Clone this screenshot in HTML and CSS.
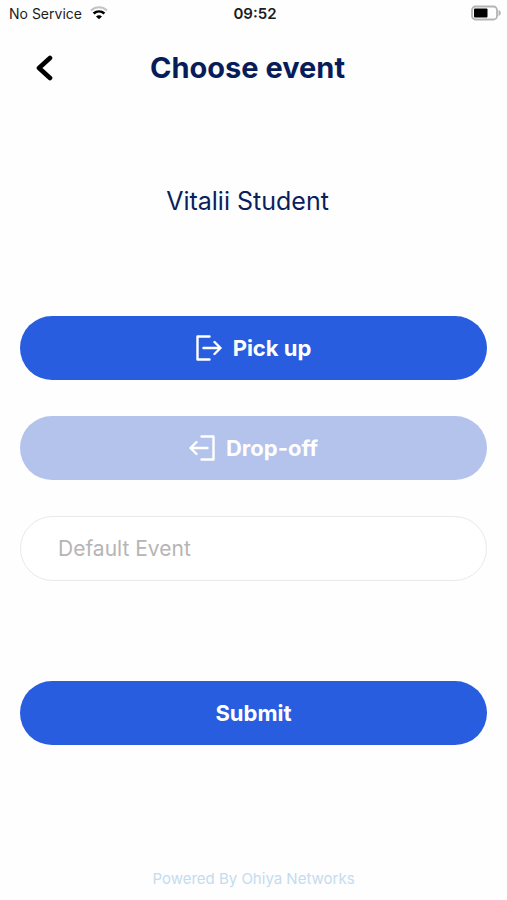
FILE: index.html
```html
<!DOCTYPE html>
<html lang="en">
<head>
<meta charset="utf-8">
<meta name="viewport" content="width=device-width, initial-scale=1">
<title>Choose event</title>
<link rel="stylesheet" href="styles.css">
</head>
<body>
<div class="status">
  <div class="carrier">
    <span>No Service</span>
    <svg class="wifi" width="18" height="14" viewBox="0 0 18 14" fill="none" aria-hidden="true">
      <path d="M1 4.4C5.6.2 12.4.2 17 4.4" stroke="#c4c4c4" stroke-width="2"/>
      <path d="M3.6 7.6C6.8 4.8 11.2 4.8 14.4 7.6" stroke="#000" stroke-width="2.6"/>
      <path d="M9 13.2L6 10.4C7.8 8.8 10.2 8.8 12 10.4Z" fill="#000"/>
    </svg>
  </div>
  <time class="clock">09:52</time>
  <svg class="battery" width="30" height="16" viewBox="0 0 30 16" fill="none" aria-hidden="true">
    <rect x="1" y="1.5" width="25" height="13" rx="3.5" stroke="#b4b4b4" stroke-width="1.8"/>
    <rect x="3" y="3.5" width="13.5" height="9" rx="1" fill="#000"/>
    <path d="M27.5 5C30.6 6.4 30.6 9.6 27.5 11Z" fill="#b4b4b4"/>
  </svg>
</div>
<header class="header">
  <button class="back" type="button" aria-label="Back">
    <svg width="18" height="26" viewBox="0 0 18 26" fill="none" aria-hidden="true">
      <path d="M15 3L4 13L15 23" stroke="#000" stroke-width="4.6" stroke-linecap="round" stroke-linejoin="round"/>
    </svg>
  </button>
  <h1 class="title">Choose event</h1>
</header>
<main class="content">
  <p class="student">Vitalii Student</p>
  <form class="form">
    <button class="pill" type="button">
      <svg width="26" height="26" viewBox="0 0 26 26" fill="none" stroke="#fff" stroke-width="2.4" stroke-linecap="round" stroke-linejoin="round" aria-hidden="true">
        <path d="M13.5 1.5H1.5V24.5H13.5M7.5 13H24.5M18.5 7L24.5 13L18.5 19"/>
      </svg>
      <span>Pick up</span>
    </button>
    <button class="pill pill-muted" type="button">
      <svg width="26" height="26" viewBox="0 0 26 26" fill="none" stroke="#fff" stroke-width="2.4" stroke-linecap="round" stroke-linejoin="round" aria-hidden="true">
        <path d="M12.5 1.5H24.5V24.5H12.5M18.5 13H1.5M7.5 7L1.5 13L7.5 19"/>
      </svg>
      <span>Drop-off</span>
    </button>
    <input class="event" type="text" placeholder="Default Event" aria-label="Event">
    <button class="pill submit" type="submit">Submit</button>
  </form>
</main>
<footer class="footer">Powered By Ohiya Networks</footer>
</body>
</html>
```
FILE: styles.css
```css
* {
  box-sizing: border-box;
}

body {
  display: flex;
  flex-direction: column;
  min-height: 100vh;
  margin: 0;
  background: #fefefe;
  color: #0a1f5c;
  font-family: Inter, "Liberation Sans", sans-serif;
}

button,
input {
  font: inherit;
}

.status {
  display: grid;
  grid-template-columns: 1fr auto 1fr;
  align-items: center;
  height: 26px;
  padding: 0 6px 0 9px;
  color: #1c1c1c;
  font-size: 14px;
}

.carrier {
  display: flex;
  align-items: center;
  gap: 8px;
}

.clock {
  font-size: 15px;
  font-weight: 600;
}

.battery {
  justify-self: end;
}

.header {
  display: grid;
  grid-template-columns: 48px 1fr 48px;
  align-items: center;
  height: 84px;
  padding: 0 32px 0 20px;
}

.back {
  display: flex;
  justify-content: center;
  padding: 8px 0;
  border: 0;
  background: none;
}

.title {
  margin: 0;
  color: #061d5a;
  font-size: 29px;
  font-weight: 700;
  line-height: 40px;
  text-align: center;
}

.content {
  padding: 0 20px;
}

.student {
  margin: 75px 12px 99px 0;
  font-size: 25px;
  line-height: 32px;
  text-align: center;
}

.form {
  display: flex;
  flex-direction: column;
  gap: 36px;
}

.pill {
  display: flex;
  align-items: center;
  justify-content: center;
  gap: 11px;
  height: 64px;
  border: 0;
  border-radius: 32px;
  background: #285ddf;
  color: #fff;
  font-size: 22px;
  font-weight: 700;
}

.pill-muted {
  background: #b4c3ec;
}

.event {
  width: 100%;
  height: 65px;
  padding: 0 37px;
  border: 1px solid #e9e9e9;
  border-radius: 33px;
  background: #fff;
  color: #0a1f5c;
  font-size: 21px;
}

.event::placeholder {
  color: #b5b5b5;
  opacity: 1;
}

.submit {
  margin-top: 64px;
}

.footer {
  margin-top: auto;
  padding: 20px 0 11px;
  color: #c3dcef;
  font-size: 15px;
  line-height: 20px;
  text-align: center;
}
```
